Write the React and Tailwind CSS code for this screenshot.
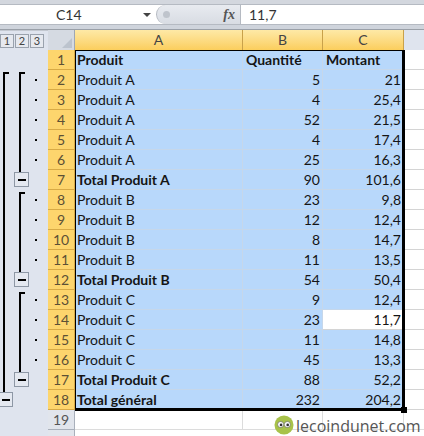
const rows = [
  ["Produit", "Quantité", "Montant", "head"],
  ["Produit A", "5", "21"],
  ["Produit A", "4", "25,4"],
  ["Produit A", "52", "21,5"],
  ["Produit A", "4", "17,4"],
  ["Produit A", "25", "16,3"],
  ["Total Produit A", "90", "101,6", "total"],
  ["Produit B", "23", "9,8"],
  ["Produit B", "12", "12,4"],
  ["Produit B", "8", "14,7"],
  ["Produit B", "11", "13,5"],
  ["Total Produit B", "54", "50,4", "total"],
  ["Produit C", "9", "12,4"],
  ["Produit C", "23", "11,7"],
  ["Produit C", "11", "14,8"],
  ["Produit C", "45", "13,3"],
  ["Total Produit C", "88", "52,2", "total"],
  ["Total général", "232", "204,2", "total"],
];

const Minus = ({ className }) => (
  <div className={"absolute w-[15px] h-[15px] border border-[#8d97a5] bg-[#e4e8f0] flex items-center justify-center " + className}>
    <div className="w-[8px] h-[2px] bg-black" />
  </div>
);

const Outline = () => (
  <div className="relative w-[48px] bg-[#dfe4ee]">
    <svg width="48" height="380" className="absolute left-0 top-0" fill="none" stroke="#000" strokeWidth="2">
      {/* level 1 */}
      <path d="M9 23H4V343" />
      {/* level 2 */}
      <path d="M25 23H20V122" />
      <path d="M25 143H20V222" />
      <path d="M25 243H20V322" />
    </svg>
    {[1, 2, 3, 4, 5, 7, 8, 9, 10, 12, 13, 14, 15].map((i) => (
      <div key={i} className="absolute left-[35px] w-[2px] h-[2px] bg-black" style={{ top: 9 + i * 20 }} />
    ))}
    <Minus className="left-[14px] top-[122px]" />
    <Minus className="left-[14px] top-[222px]" />
    <Minus className="left-[14px] top-[322px]" />
    <Minus className="left-[-2px] top-[342px]" />
  </div>
);

function Cell({ w, children, right, bold, active }) {
  return (
    <div
      className={
        "h-[20px] px-[2px] flex items-center border-b border-r " +
        w +
        (active ? " bg-white border-[#d4d4d4]" : " bg-[#b8d8fb] border-[#c6d7ea]") +
        (right ? " justify-end" : "") +
        (bold ? " font-bold" : "")
      }
    >
      {children}
    </div>
  );
}

export default function App() {
  return (
    <div className="relative w-[424px] h-[436px] overflow-hidden bg-white text-[#151515] text-[14px] leading-none font-['Lato',sans-serif]">
      {/* name box + formula bar */}
      <div className="h-[30px] flex flex-col bg-[#dfe3ea] border-b border-[#9aa0a8]">
        <div className="h-[4px] bg-[#d3d7de]" />
        <div className="flex h-[21px] bg-white border-y border-[#b5bac2]">
          <div className="w-[142px] flex items-center pl-[56px] text-[#333]">C14</div>
          <div className="w-[9px] flex items-center justify-center">
            <div className="w-0 h-0 border-x-[4px] border-x-transparent border-t-[4px] border-t-[#444]" />
          </div>
          <div className="flex-1 flex items-stretch ml-[5px]">
            <div className="w-[84px] flex items-center justify-between rounded-l-full border-l border-[#b5bac2] bg-gradient-to-b from-[#e8ebf0] to-[#d8dce3] pl-[6px] pr-[5px]">
              <div className="w-[7px] h-[7px] rounded-full bg-[#bfc4cc]" />
              <span className="font-['Liberation_Serif',serif] italic font-bold text-[14px] text-[#555]">fx</span>
            </div>
            <div className="flex-1 bg-white border-l border-[#b5bac2] flex items-center pl-[8px] text-[#333]">11,7</div>
          </div>
        </div>
        <div className="flex-1 bg-[#cfd4dc]" />
      </div>

      {/* column headers */}
      <div className="flex h-[20px]">
        <div className="w-[48px] bg-[#dfe4ee] flex items-center gap-[1px] border-t border-[#c3c8d0]">
          {["1", "2", "3"].map((n) => (
            <div key={n} className="w-[14px] h-[14px] border border-[#9aa2ad] bg-[#e6e9ef] text-[11px] text-[#444] flex items-center justify-center">
              {n}
            </div>
          ))}
        </div>
        <div className="w-[27px] bg-[#d5dae2] border-r border-[#9ea7b4] flex items-end justify-end p-[2px]">
          <div className="w-0 h-0 border-l-[10px] border-l-transparent border-b-[10px] border-b-[#bcc3cd]" />
        </div>
        {[["A", "w-[168px]"], ["B", "w-[80px]"], ["C", "w-[81px]"]].map(([c, w]) => (
          <div key={c} className={"flex items-center justify-center border-r border-[#c9a14a] bg-gradient-to-b from-[#fee9a6] to-[#fbce5c] text-[#444] " + w}>
            {c}
          </div>
        ))}
        <div className="flex-1 bg-[#dfe4ee]" />
      </div>

      <div className="flex">
        <Outline />
        <div className="w-[27px]">
          {rows.map((_, i) => (
            <div key={i} className="h-[20px] flex items-center justify-center bg-[#fdd56d] border-b border-r border-[#d8aa45] text-[#5c5035]">
              {i + 1}
            </div>
          ))}
          <div className="h-[20px] flex items-center justify-center bg-[#e1e5ec] border-b border-r border-[#a9b0bb] text-[#555]">19</div>
          <div className="h-[20px] bg-[#e1e5ec] border-r border-[#a9b0bb]" />
        </div>
        <div>
          <div className="relative w-[349px]">
            {rows.map(([a, b, c, kind], i) => {
              const head = kind === "head";
              return (
                <div key={i} className="flex">
                  <Cell w="w-[168px]" bold={kind}>{a}</Cell>
                  <Cell w="w-[80px]" bold={head} right={!head}>
                    {head ? <span className="pl-[1px]">{b}</span> : b}
                  </Cell>
                  <Cell w="w-[81px]" bold={head} right={!head} active={i === 13}>
                    {head ? <span className="pl-[1px]">{c}</span> : c}
                  </Cell>
                  <div className="w-[20px] border-b border-[#d4d4d4]" />
                </div>
              );
            })}
            {/* selection frame */}
            <div className="absolute left-0 top-0 w-[330px] h-[361px] border-t border-l border-r-[3px] border-b-[3px] border-black pointer-events-none" />
            <div className="absolute left-[326px] top-[357px] w-[6px] h-[6px] bg-black" />
          </div>
          <div className="flex h-[20px] border-b border-[#dcdcdc]">
            <div className="w-[168px] border-r border-[#dcdcdc]" />
            <div className="w-[80px] border-r border-[#dcdcdc]" />
            <div className="w-[81px] border-r border-[#dcdcdc]" />
          </div>
        </div>
      </div>

      {/* watermark */}
      <div className="absolute left-[274px] top-[415px] flex items-start">
        <svg width="20" height="20" viewBox="0 0 21 21">
          <circle cx="10.5" cy="10.5" r="10" fill="#a8c24a" />
          <circle cx="7" cy="10" r="3.2" fill="#fff" stroke="#555" strokeWidth="0.6" />
          <circle cx="14" cy="10" r="3.2" fill="#fff" stroke="#555" strokeWidth="0.6" />
          <circle cx="7.4" cy="10.4" r="1.4" fill="#333" />
          <circle cx="14.4" cy="10.4" r="1.4" fill="#333" />
        </svg>
        <span className="ml-[2px] mt-[3px] text-[16px] whitespace-nowrap text-[#555] font-['Open_Sans',sans-serif]">lecoindunet.com</span>
      </div>
    </div>
  );
}
